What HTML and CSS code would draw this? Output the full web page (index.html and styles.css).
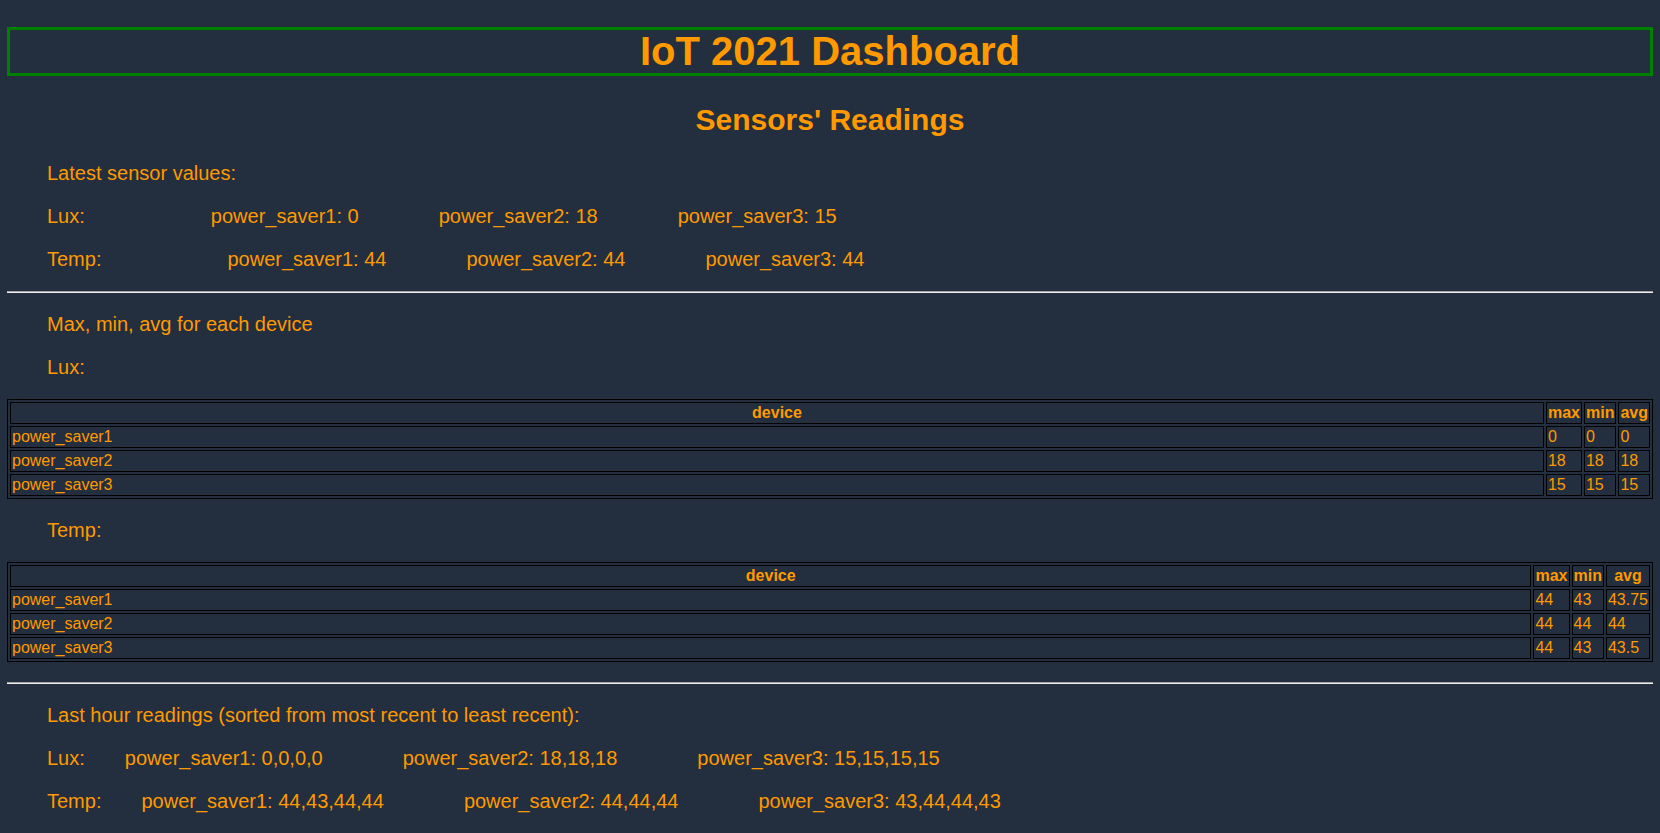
FILE: index.html
```html
<!DOCTYPE html>
<html lang="en">
<head>
<meta charset="utf-8">
<title>IoT 2021 Dashboard</title>
<link rel="stylesheet" href="styles.css">
</head>
<body>
<h1 class="title">IoT 2021 Dashboard</h1>
<h2 class="subtitle">Sensors' Readings</h2>

<p class="line">Latest sensor values:</p>
<p class="line"><span class="label">Lux:</span><span class="val lead-latest">power_saver1: 0</span><span class="val">power_saver2: 18</span><span class="val">power_saver3: 15</span></p>
<p class="line"><span class="label">Temp:</span><span class="val lead-latest">power_saver1: 44</span><span class="val">power_saver2: 44</span><span class="val">power_saver3: 44</span></p>

<hr class="sep">

<p class="line">Max, min, avg for each device</p>
<p class="line">Lux:</p>
<table class="stats">
  <thead>
    <tr><th class="dev">device</th><th>max</th><th>min</th><th>avg</th></tr>
  </thead>
  <tbody>
    <tr><td>power_saver1</td><td>0</td><td>0</td><td>0</td></tr>
    <tr><td>power_saver2</td><td>18</td><td>18</td><td>18</td></tr>
    <tr><td>power_saver3</td><td>15</td><td>15</td><td>15</td></tr>
  </tbody>
</table>
<p class="line">Temp:</p>
<table class="stats">
  <thead>
    <tr><th class="dev">device</th><th>max</th><th>min</th><th>avg</th></tr>
  </thead>
  <tbody>
    <tr><td>power_saver1</td><td>44</td><td>43</td><td>43.75</td></tr>
    <tr><td>power_saver2</td><td>44</td><td>44</td><td>44</td></tr>
    <tr><td>power_saver3</td><td>44</td><td>43</td><td>43.5</td></tr>
  </tbody>
</table>

<hr class="sep">

<p class="line">Last hour readings (sorted from most recent to least recent):</p>
<p class="line"><span class="label">Lux:</span><span class="val lead-hour">power_saver1: 0,0,0,0</span><span class="val">power_saver2: 18,18,18</span><span class="val">power_saver3: 15,15,15,15</span></p>
<p class="line"><span class="label">Temp:</span><span class="val lead-hour">power_saver1: 44,43,44,44</span><span class="val">power_saver2: 44,44,44</span><span class="val">power_saver3: 43,44,44,43</span></p>
</body>
</html>
```

FILE: styles.css
```css
html {
  background: #232f3e;
}

body {
  margin: 0 7px 8px;
  background: #232f3e;
  color: #ff9900;
  font-family: "Liberation Sans", Arial, sans-serif;
  font-size: 16px;
}

.title {
  margin: 27px 0 26.8px;
  border: 3px solid #008000;
  font-size: 40px;
  line-height: 43px;
  font-weight: bold;
  text-align: center;
}

.subtitle {
  margin: 24.9px 0;
  font-size: 30px;
  line-height: 34.5px;
  font-weight: bold;
  text-align: center;
}

.line {
  margin: 20px 0 20px 40px;
  font-size: 20px;
  line-height: 23px;
  white-space: nowrap;
}

.val + .val {
  margin-left: 80px;
}

.lead-latest {
  margin-left: 126px;
}

.lead-hour {
  margin-left: 40px;
}

.sep {
  margin: 20px 0;
  height: 0;
  border: 0;
  border-top: 1px solid #a3a3a3;
  border-bottom: 1px solid #eeeeee;
}

.stats {
  width: 100%;
  border: 1px solid #000;
  border-spacing: 2px;
  font-size: 16px;
  line-height: 18px;
}

.stats th,
.stats td {
  border: 1px solid #000;
  padding: 1px;
  white-space: nowrap;
}

.stats th {
  font-weight: bold;
  text-align: center;
}

.stats th.dev {
  width: 100%;
}

.stats td {
  text-align: left;
}
```
